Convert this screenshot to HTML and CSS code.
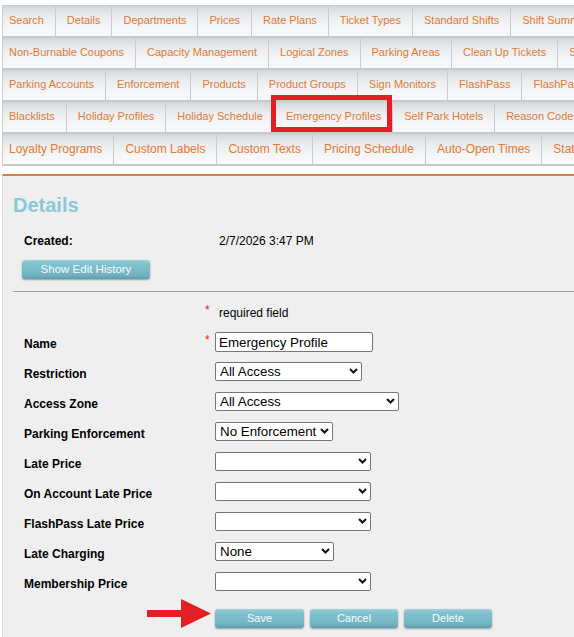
FILE: index.html
```html
<!DOCTYPE html>
<html lang="en">
<head>
<meta charset="utf-8">
<title>Emergency Profiles - Details</title>
<link rel="stylesheet" href="styles.css">
</head>
<body>
<nav class="tabs">
  <div class="tab-row">
    <a class="tab">Search</a><a class="tab">Details</a><a class="tab">Departments</a><a class="tab">Prices</a><a class="tab">Rate Plans</a><a class="tab">Ticket Types</a><a class="tab">Standard Shifts</a><a class="tab">Shift Summary</a>
  </div>
  <div class="tab-row">
    <a class="tab">Non-Burnable Coupons</a><a class="tab">Capacity Management</a><a class="tab">Logical Zones</a><a class="tab">Parking Areas</a><a class="tab">Clean Up Tickets</a><a class="tab">Surcharges</a>
  </div>
  <div class="tab-row">
    <a class="tab">Parking Accounts</a><a class="tab">Enforcement</a><a class="tab">Products</a><a class="tab">Product Groups</a><a class="tab">Sign Monitors</a><a class="tab">FlashPass</a><a class="tab">FlashPass Groups</a>
  </div>
  <div class="tab-row">
    <a class="tab">Blacklists</a><a class="tab">Holiday Profiles</a><a class="tab">Holiday Schedule</a><a class="tab tab-highlight">Emergency Profiles</a><a class="tab">Self Park Hotels</a><a class="tab">Reason Codes</a>
  </div>
  <div class="tab-row tab-row-lg">
    <a class="tab">Loyalty Programs</a><a class="tab">Custom Labels</a><a class="tab">Custom Texts</a><a class="tab">Pricing Schedule</a><a class="tab">Auto-Open Times</a><a class="tab">Statistics</a>
  </div>
</nav>

<main class="panel">
  <h2 class="panel-title">Details</h2>
  <div class="meta">
    <span class="meta-label">Created:</span>
    <span class="meta-value">2/7/2026 3:47 PM</span>
  </div>
  <button type="button" class="btn btn-history">Show Edit History</button>
  <hr class="divider">

  <form class="form">
    <span class="label"></span><span class="req">*</span><span class="note">required field</span>

    <label class="label">Name</label><span class="req">*</span>
    <div class="field"><input class="text-input" type="text" value="Emergency Profile"></div>

    <label class="label">Restriction</label><span></span>
    <div class="field"><span class="select-wrap"><select class="select w-147"><option>All Access</option></select><svg class="chev" viewBox="0 0 9 6"><polyline points="1,1 4.5,4.5 8,1"/></svg></span></div>

    <label class="label">Access Zone</label><span></span>
    <div class="field"><span class="select-wrap"><select class="select w-184"><option>All Access</option></select><svg class="chev" viewBox="0 0 9 6"><polyline points="1,1 4.5,4.5 8,1"/></svg></span></div>

    <label class="label">Parking Enforcement</label><span></span>
    <div class="field"><span class="select-wrap"><select class="select w-118"><option>No Enforcement</option></select><svg class="chev" viewBox="0 0 9 6"><polyline points="1,1 4.5,4.5 8,1"/></svg></span></div>

    <label class="label">Late Price</label><span></span>
    <div class="field"><span class="select-wrap"><select class="select w-156"><option></option></select><svg class="chev" viewBox="0 0 9 6"><polyline points="1,1 4.5,4.5 8,1"/></svg></span></div>

    <label class="label">On Account Late Price</label><span></span>
    <div class="field"><span class="select-wrap"><select class="select w-156"><option></option></select><svg class="chev" viewBox="0 0 9 6"><polyline points="1,1 4.5,4.5 8,1"/></svg></span></div>

    <label class="label">FlashPass Late Price</label><span></span>
    <div class="field"><span class="select-wrap"><select class="select w-156"><option></option></select><svg class="chev" viewBox="0 0 9 6"><polyline points="1,1 4.5,4.5 8,1"/></svg></span></div>

    <label class="label">Late Charging</label><span></span>
    <div class="field"><span class="select-wrap"><select class="select w-119"><option>None</option></select><svg class="chev" viewBox="0 0 9 6"><polyline points="1,1 4.5,4.5 8,1"/></svg></span></div>

    <label class="label">Membership Price</label><span></span>
    <div class="field"><span class="select-wrap"><select class="select w-156"><option></option></select><svg class="chev" viewBox="0 0 9 6"><polyline points="1,1 4.5,4.5 8,1"/></svg></span></div>

    <div class="actions">
      <svg class="arrow" viewBox="0 0 64 29" aria-hidden="true"><rect x="0" y="11" width="36" height="7"/><polygon points="34,0 64,14.5 34,29"/></svg>
      <button type="button" class="btn btn-save">Save</button>
      <button type="button" class="btn">Cancel</button>
      <button type="button" class="btn">Delete</button>
    </div>
  </form>
</main>
</body>
</html>
```

FILE: styles.css
```css
html, body {
  margin: 0;
  padding: 0;
}

body {
  font-family: "Liberation Sans", Arial, sans-serif;
  background: #ffffff;
  color: #000;
  display: flex;
  flex-direction: column;
  min-height: 100vh;
  overflow: hidden;
}

/* ---------- tabs ---------- */
.tabs {
  margin: 5px 0 0 2px;
  border-top: 1px solid #cdcdcd;
  border-left: 1px solid #cdcdcd;
  overflow: hidden;
}

.tab-row {
  display: flex;
  height: 30px;
  border-bottom: 2px solid #c8c8c8;
}

.tab {
  flex: 0 0 auto;
  position: relative;
  height: 30px;
  box-sizing: border-box;
  padding: 0 11px 2px;
  line-height: 28px;
  font-size: 11px;
  color: #e8792f;
  white-space: nowrap;
  text-decoration: none;
  border-right: 1px solid #cbcbcb;
  background: linear-gradient(to bottom, #d3d7da 0%, #eaedef 35%, #f4f6f7 70%, #f7f9fa 100%);
}

.tab:first-child {
  padding-left: 6px;
}

.tab-row-lg .tab {
  font-size: 12px;
  padding-bottom: 0;
  line-height: 30px;
}

.tab-highlight::after {
  content: "";
  position: absolute;
  left: -4px;
  right: 0;
  top: -7px;
  bottom: 0;
  border: 5px solid #e31e24;
}

/* ---------- panel ---------- */
.panel {
  flex: 1;
  margin: 8px 0 0 2px;
  border-top: 2px solid #e47c37;
  border-left: 1px solid #dcdcdc;
  background: #efefef;
  padding: 17px 0 0 10px;
}

.panel-title {
  margin: 0;
  font-size: 20px;
  line-height: 24px;
  font-weight: bold;
  color: #88c9d8;
}

.meta {
  display: grid;
  grid-template-columns: 195px auto;
  margin-top: 17px;
  padding-left: 11px;
  font-size: 12px;
  line-height: 14px;
}

.meta-label {
  font-weight: bold;
}

.btn {
  height: 19px;
  width: 88px;
  padding: 0;
  border: 0;
  border-radius: 3px;
  font-family: "Liberation Sans", Arial, sans-serif;
  font-size: 11px;
  line-height: 19px;
  color: #f6fcfd;
  background: linear-gradient(to bottom, #9ad3dd 0%, #80c1cd 20%, #77b9c7 60%, #6eb1c0 82%, #5b9dac 100%);
  box-shadow: 0 1px 2px rgba(0, 0, 0, 0.35);
}

.btn-history {
  display: block;
  width: 128px;
  margin: 12px 0 0 9px;
  font-size: 11.5px;
}

.btn-save {
  width: 89px;
}

.divider {
  margin: 12px 0 0;
  height: 0;
  border: 0;
  border-top: 1px solid #a3a3a3;
}

/* ---------- form ---------- */
.form {
  display: grid;
  grid-template-columns: 181px 10px 1fr;
  grid-auto-rows: 30px;
  margin: 6px 0 0;
  padding-left: 11px;
  font-size: 12px;
  line-height: 14px;
}

.label {
  align-self: center;
  margin-top: 2px;
  font-weight: bold;
}

.req {
  align-self: start;
  padding-top: 5px;
  color: #e4141b;
  font-size: 12px;
}

.note {
  align-self: center;
  padding-left: 4px;
}

.field {
  display: flex;
  align-items: flex-start;
  padding-top: 4px;
}

.text-input {
  box-sizing: border-box;
  width: 158px;
  height: 20px;
  margin: 0;
  padding: 0 3px;
  border: 1px solid #767676;
  border-radius: 2px;
  background: #fff;
  color: #000;
  font-family: "Liberation Sans", Arial, sans-serif;
  font-size: 13.33px;
}

.select-wrap {
  position: relative;
  display: inline-flex;
}

.select {
  -webkit-appearance: none;
  appearance: none;
  box-sizing: border-box;
  height: 19px;
  margin: 0;
  padding: 0 14px 0 4px;
  border: 1px solid #767676;
  border-radius: 2px;
  background: #fff;
  color: #000;
  font-family: "Liberation Sans", Arial, sans-serif;
  font-size: 13.33px;
}

.w-118 { width: 118px; }
.w-119 { width: 119px; }
.w-147 { width: 147px; }
.w-156 { width: 156px; }
.w-184 { width: 184px; }

.chev {
  position: absolute;
  right: 4px;
  top: 6px;
  width: 9px;
  height: 6px;
  pointer-events: none;
  fill: none;
  stroke: #111;
  stroke-width: 2;
}

.actions {
  grid-column: 3;
  position: relative;
  display: flex;
  align-items: flex-start;
  gap: 6px;
  padding-top: 11px;
}

.arrow {
  position: absolute;
  left: -68px;
  top: 1px;
  width: 64px;
  height: 29px;
  fill: #e31e24;
}
```
